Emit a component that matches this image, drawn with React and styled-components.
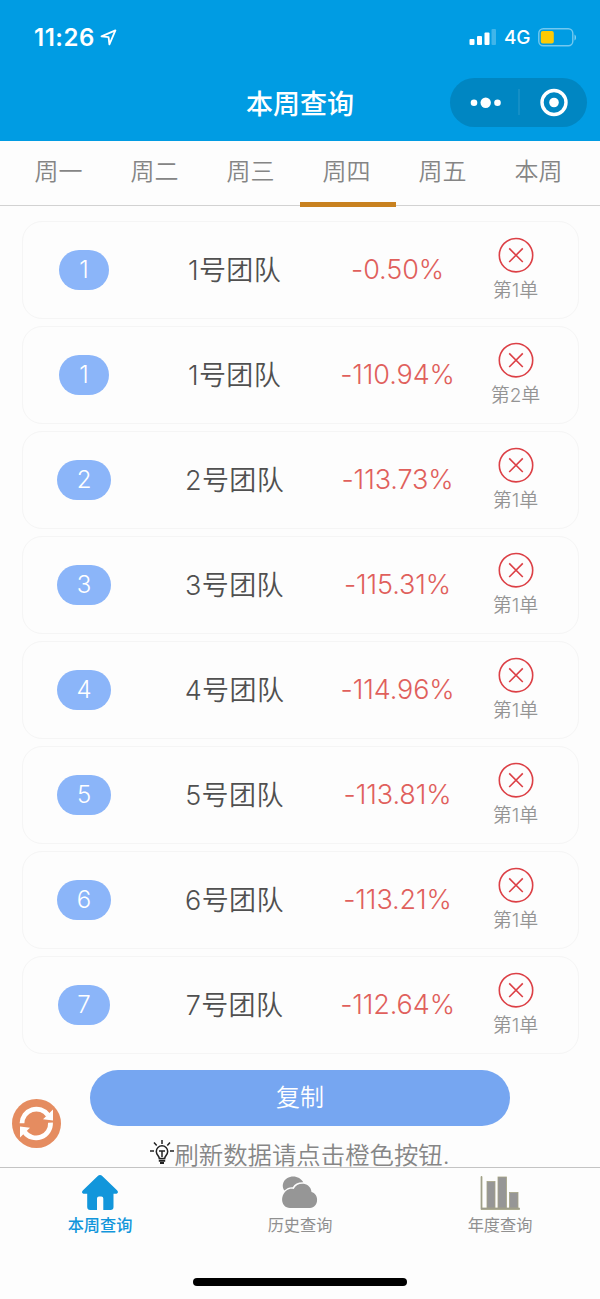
import React from 'react'
import styled, { createGlobalStyle } from 'styled-components'

const GlobalStyle = createGlobalStyle`
    * {
        box-sizing: border-box;
    }

    body {
        margin: 0;
        background: #fdfdfd;
        font-family: Inter, 'Noto Sans CJK SC', sans-serif;
    }
`

const Screen = styled.div`
    position: relative;
    display: flex;
    flex-direction: column;
    width: 600px;
    height: 1299px;
    overflow: hidden;
    background: #fdfdfd;
`

const Header = styled.header`
    flex: none;
    height: 141px;
    background: #009ce3;
    color: #fff;
`

const StatusBar = styled.div`
    display: flex;
    align-items: center;
    height: 74px;
    padding: 0 23px 0 34px;
`

const Time = styled.span`
    width: 61px;
    font-size: 24px;
    font-weight: 600;
    letter-spacing: 0.5px;
    white-space: nowrap;
    margin-right: 5px;
`

const StatusIcons = styled.div`
    display: flex;
    align-items: center;
    margin-left: auto;
`

const Network = styled.span`
    width: 26px;
    margin: 0 8px 0 7px;
    font-size: 19px;
    font-weight: 500;
    letter-spacing: -0.3px;
    white-space: nowrap;
`

const NavBar = styled.div`
    display: grid;
    grid-template-columns: 150px 300px 137px;
    align-items: center;
    height: 57px;
`

const Title = styled.h1`
    grid-column: 2;
    margin: 0;
    padding-top: 5px;
    text-align: center;
    font-size: 27px;
    line-height: 40px;
    font-weight: 500;
`

const Capsule = styled.div`
    display: flex;
    align-items: center;
    height: 49px;
    border-radius: 25px;
    background: #0086c2;
`

const Tabs = styled.nav`
    display: flex;
    flex: none;
    height: 65px;
    padding: 0 12px;
    box-shadow: inset 0 -1px #d2d2d2;
`

const Tab = styled.div`
    flex: 1;
    height: 66px;
    padding-right: 3px;
    border-bottom: 5px solid ${({ $active }) => ($active ? '#c8811f' : 'transparent')};
    text-align: center;
    font-size: 24px;
    line-height: 61px;
    font-weight: 350;
    color: #858585;
`

const Content = styled.main`
    display: flex;
    flex-direction: column;
    align-items: center;
    flex: none;
    height: 961px;
    padding-top: 15px;
`

const Card = styled.div`
    display: grid;
    grid-template-columns: 123px 178px 148px 88px;
    align-items: center;
    flex: none;
    width: 557px;
    height: 98px;
    margin-bottom: 7px;
    border: 1px solid #f5f5f5;
    border-radius: 20px;
`

const Badge = styled.span`
    justify-self: center;
    min-width: 50px;
    height: 40px;
    padding: 0 19.5px;
    border-radius: 20px;
    background: #8bb5f9;
    color: #fff;
    text-align: center;
    font-size: 24px;
    line-height: 40px;
    font-weight: 350;
`

const Name = styled.span`
    padding-bottom: 4px;
    text-align: center;
    font-size: 27px;
    font-weight: 350;
    letter-spacing: 0.4px;
    color: #505050;
`

const Percent = styled.span`
    padding-bottom: 1px;
    text-align: center;
    font-size: 27px;
    font-weight: 350;
    letter-spacing: -0.1px;
    color: #e0605c;
`

const Result = styled.div`
    display: flex;
    flex-direction: column;
    align-items: center;
    font-size: 19px;
    line-height: 26px;
    font-weight: 350;
    color: #949494;

    svg {
        margin-bottom: 5px;
    }
`

const CopyButton = styled.button`
    flex: none;
    width: 420px;
    height: 56px;
    margin: 9px 0 0;
    padding: 0 0 5px;
    border: none;
    border-radius: 28px;
    background: #76a6f1;
    color: #fff;
    font-family: inherit;
    font-size: 24px;
    font-weight: 350;
`

const Hint = styled.div`
    display: flex;
    flex: none;
    align-items: center;
    height: 36px;
    margin-top: 9px;
    font-size: 24.4px;
    font-weight: 350;
    color: #868686;
    white-space: nowrap;
`

const RefreshButton = styled.div`
    position: absolute;
    left: 12px;
    top: 1099px;
    width: 49px;
    height: 49px;
`

const TabBar = styled.footer`
    display: flex;
    flex: none;
    height: 111px;
    border-top: 1px solid #c4c4c4;
`

const TabItem = styled.div`
    display: flex;
    flex: 1;
    flex-direction: column;
    align-items: center;
    padding-top: 5px;
    font-size: 16.2px;
    line-height: 25px;
    font-weight: ${({ $active }) => ($active ? 500 : 400)};
    color: ${({ $active }) => ($active ? '#1296db' : '#909090')};
`

const HomeIndicator = styled.div`
    align-self: center;
    flex: none;
    width: 214px;
    height: 8px;
    border-radius: 4px;
    background: #000;
`

const LocationIcon = () => (
    <svg width='17' height='17' viewBox='0 0 17 17' fill='none'>
        <path d='M1.5 7.4 15.4 1.4 9.4 15.3 8.6 8.2Z' stroke='#fff' strokeWidth='1.8' strokeLinejoin='round' />
    </svg>
)

const SignalIcon = () => (
    <svg width='28' height='18' viewBox='0 0 28 18' fill='#fff'>
        <rect x='0.500' y='11' width='5' height='6' rx='1' />
        <rect x='8' y='8' width='5' height='9' rx='1' />
        <rect x='15.500' y='4.500' width='5' height='12.500' rx='1' />
        <rect x='22.500' y='1' width='4.500' height='16' rx='1' opacity='0.25' />
    </svg>
)

const BatteryIcon = () => (
    <svg width='39' height='19' viewBox='0 0 39 19'>
        <rect x='0.8' y='0.8' width='34' height='17' rx='4.500' fill='none' stroke='#fff' strokeOpacity='0.45' strokeWidth='1.4' />
        <rect x='2.800' y='3' width='13' height='12.500' rx='2' fill='#fdca05' />
        <path d='M36.500 6.500v6c2-.8 2-5.200 0-6Z' fill='#fff' opacity='0.5' />
    </svg>
)

const CapsuleIcons = () => (
    <svg width='137' height='49' viewBox='0 0 137 49' fill='#fff'>
        <circle cx='24' cy='24.700' r='3.300' />
        <circle cx='35.700' cy='24.700' r='5.200' />
        <circle cx='47.500' cy='24.700' r='3.300' />
        <path d='M69 11v26' stroke='#fff' strokeOpacity='0.16' />
        <circle cx='104' cy='24.500' r='12' fill='none' stroke='#fff' strokeWidth='3.400' />
        <circle cx='104' cy='24.500' r='4.800' />
    </svg>
)

const CrossIcon = () => (
    <svg width='36' height='36' viewBox='0 0 36 36' fill='none' stroke='#dc4046' strokeWidth='1.6'>
        <circle cx='18' cy='18.200' r='16.700' />
        <path d='M11.200 11.400 24.800 25M24.800 11.400 11.200 25' />
    </svg>
)

const BulbIcon = () => (
    <svg width='24' height='26' viewBox='0 0 24 26' fill='none' stroke='#222' strokeWidth='1.500'>
        <path d='M12 0v4M4 2.500 6.700 5.600M20 2.500 17.300 5.600M0 11h4M20 11h4' />
        <path d='M9.300 18.500C9.300 16 6.300 14.800 6.300 11.500a5.700 5.700 0 0 1 11.400 0C17.700 14.800 14.700 16 14.700 18.500Z' />
        <path d='M9 11h6M12 11v6' />
        <path d='M8.800 20.700h6.400M10 23h4' strokeWidth='2' />
    </svg>
)

const RefreshIcon = () => (
    <svg width='49' height='49' viewBox='0 0 49 49'>
        <circle cx='24.500' cy='24.500' r='24.500' fill='#e58c60' />
        <path d='M10 24.300A14.400 14.400 0 0 1 36 16' fill='none' stroke='#fff' strokeWidth='4.800' />
        <path d='M41 10.500V21.500L31 20.300Z' fill='#fff' />
        <path d='M38.500 23.700A14.400 14.400 0 0 1 12.500 33' fill='none' stroke='#fff' strokeWidth='4.800' />
        <path d='M8 38.500V27.500L18 28.700Z' fill='#fff' />
    </svg>
)

const HomeIcon = () => (
    <svg width='40' height='40' viewBox='0 0 40 40' fill='#1296db'>
        <path d='M17.500 3.300a3.500 3.500 0 0 1 5 0L37 17.300c1.800 1.800.8 3.500-1.200 3.500H33.500V34q0 3-3 3H23.300V25.500q0-2-2-2H19q-2 0-2 2V37H10.200q-3 0-3-3V20.800H4.200c-2 0-3-1.700-1.200-3.500Z' />
    </svg>
)

const CloudIcon = () => (
    <svg width='40' height='40' viewBox='0 0 40 40' fill='#969696'>
        <path d='M4.500 17.500C1.500 14 2.500 8 7 5.200 13 1.500 20.500 4 23.300 9.200Q15.500 9 12.800 14.200 8 13.800 4.500 17.500Z' />
        <path d='M13.700 16C17 8.500 30.500 9 31.500 19 39.500 21 39 34.500 30 35H10C.5 34.500 0 22.500 6.500 17.500 9 15.500 11.500 15.500 13.700 16Z' />
    </svg>
)

const ChartIcon = () => (
    <svg width='40' height='40' viewBox='0 0 40 40' fill='#969696' stroke='#a5a484' strokeWidth='0.8'>
        <path d='M1 3.500h1V35H39.500v1.500H1Z' />
        <rect x='7' y='8.500' width='8' height='26.500' />
        <rect x='18' y='4' width='8.500' height='31' />
        <rect x='29.500' y='19.500' width='8.500' height='15.500' />
    </svg>
)

const days = ['周一', '周二', '周三', '周四', '周五', '本周']

const teams = [
    { id: 1, percent: '-0.50%', order: 1 },
    { id: 1, percent: '-110.94%', order: 2 },
    { id: 2, percent: '-113.73%', order: 1 },
    { id: 3, percent: '-115.31%', order: 1 },
    { id: 4, percent: '-114.96%', order: 1 },
    { id: 5, percent: '-113.81%', order: 1 },
    { id: 6, percent: '-113.21%', order: 1 },
    { id: 7, percent: '-112.64%', order: 1 },
]

const App = () => {
    return (
        <Screen>
            <GlobalStyle />
            <Header>
                <StatusBar>
                    <Time>11:26</Time>
                    <LocationIcon />
                    <StatusIcons>
                        <SignalIcon />
                        <Network>4G</Network>
                        <BatteryIcon />
                    </StatusIcons>
                </StatusBar>
                <NavBar>
                    <Title>本周查询</Title>
                    <Capsule>
                        <CapsuleIcons />
                    </Capsule>
                </NavBar>
            </Header>
            <Tabs>
                {days.map(day => (
                    <Tab key={day} $active={day === '周四'}>{day}</Tab>
                ))}
            </Tabs>
            <Content>
                {teams.map(({ id, percent, order }) => (
                    <Card key={percent}>
                        <Badge>{id}</Badge>
                        <Name>{id}号团队</Name>
                        <Percent>{percent}</Percent>
                        <Result>
                            <CrossIcon />
                            第{order}单
                        </Result>
                    </Card>
                ))}
                <CopyButton type='button'>复制</CopyButton>
                <Hint>
                    <BulbIcon />
                    刷新数据请点击橙色按钮.
                </Hint>
            </Content>
            <TabBar>
                <TabItem $active>
                    <HomeIcon />
                    本周查询
                </TabItem>
                <TabItem>
                    <CloudIcon />
                    历史查询
                </TabItem>
                <TabItem>
                    <ChartIcon />
                    年度查询
                </TabItem>
            </TabBar>
            <HomeIndicator />
            <RefreshButton>
                <RefreshIcon />
            </RefreshButton>
        </Screen>
    )
}

export default App
